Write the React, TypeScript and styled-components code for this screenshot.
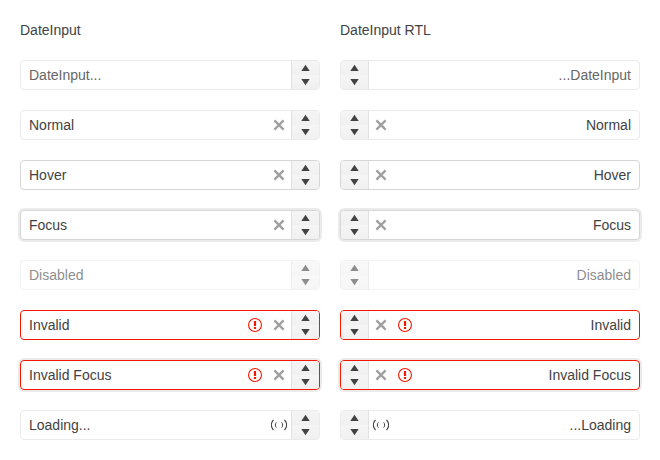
import React from 'react';
import styled, { createGlobalStyle, css } from 'styled-components';

const GlobalStyle = createGlobalStyle`
  body {
    margin: 0;
    background: #fff;
    color: #424242;
    font: 14px/20px "Liberation Sans", Arial, sans-serif;
  }
`;

type Status = 'normal' | 'hover' | 'focus' | 'disabled' | 'invalid' | 'invalidFocus' | 'loading';

interface Field {
  text: string;
  status: Status;
  placeholder?: boolean;
}

const fields: Field[] = [
  { text: 'DateInput...', status: 'normal', placeholder: true },
  { text: 'Normal', status: 'normal' },
  { text: 'Hover', status: 'hover' },
  { text: 'Focus', status: 'focus' },
  { text: 'Disabled', status: 'disabled' },
  { text: 'Invalid', status: 'invalid' },
  { text: 'Invalid Focus', status: 'invalidFocus' },
  { text: 'Loading...', status: 'loading' },
];

const Page = styled.main`
  display: grid;
  grid-template-columns: 300px 300px;
  gap: 20px;
  padding: 20px;
`;

const Column = styled.section`
  display: flex;
  flex-direction: column;
  gap: 20px;
`;

const Title = styled.div`
  height: 20px;
`;

const DateInput = styled.div<{ $status: Status }>`
  box-sizing: border-box;
  display: flex;
  height: 30px;
  border: 1px solid #ebebeb;
  border-radius: 4px;
  overflow: hidden;
  background: #fff;
  ${({ $status }) =>
    ($status === 'hover' || $status === 'focus') &&
    css`
      border-color: #d6d6d6;
    `}
  ${({ $status }) =>
    ($status === 'invalid' || $status === 'invalidFocus') &&
    css`
      border-color: #f31700;
    `}
  ${({ $status }) =>
    ($status === 'focus' || $status === 'invalidFocus') &&
    css`
      box-shadow: 0 0 0 2px rgba(0, 0, 0, 0.08);
    `}
  ${({ $status }) =>
    $status === 'disabled' &&
    css`
      opacity: 0.6;
    `}
`;

const Value = styled.span<{ $placeholder?: boolean }>`
  flex: 1;
  padding: 4px 8px;
  color: ${({ $placeholder }) => ($placeholder ? '#666' : 'inherit')};
`;

const IconSlot = styled.span<{ $tone?: 'error' | 'muted' }>`
  display: flex;
  align-items: center;
  justify-content: center;
  width: 24px;
  color: ${({ $tone }) => ($tone === 'error' ? '#f31700' : 'inherit')};
  opacity: ${({ $tone }) => ($tone === 'muted' ? 0.5 : 1)};
`;

const Spinner = styled.span`
  display: flex;
  flex-direction: column;
  width: 27px;
  border-inline-start: 1px solid rgba(0, 0, 0, 0.08);
  background-color: #f5f5f5;
`;

const SpinButton = styled.span`
  display: flex;
  align-items: center;
  justify-content: center;
  height: 14px;
  background-image: linear-gradient(rgba(0, 0, 0, 0), rgba(0, 0, 0, 0.02));
`;

const Icon = styled.svg`
  display: block;
  flex: none;
  width: 16px;
  height: 16px;
  fill: currentColor;
`;

const CaretIcon = styled(Icon)`
  width: 17px;
`;

const ClearIcon = () => (
  <Icon viewBox="0 0 16 16">
    <path d="M3.4 3.4l9.2 9.2M12.6 3.4l-9.2 9.2" stroke="currentColor" strokeWidth="2.3" />
  </Icon>
);

const WarningIcon = () => (
  <Icon viewBox="0 0 16 16">
    <path
      fillRule="evenodd"
      d="M8 1a7 7 0 1 0 0 14A7 7 0 0 0 8 1zm0 1.1a5.9 5.9 0 1 1 0 11.8A5.9 5.9 0 0 1 8 2.1zM6.9 4h2.2v5H6.9zM6.9 10h2.2v2H6.9z"
    />
  </Icon>
);

const LoadingIcon = () => (
  <Icon viewBox="0 0 16 16">
    <g fill="none" stroke="currentColor">
      <path d="M2.5 2.8C-.2 6-.2 10 2.5 13.2M13.5 2.8c2.7 3.2 2.7 7.2 0 10.4" strokeWidth="1.1" />
      <path d="M5.3 5.4c-1.3 1.6-1.3 3.6 0 5.2M10.7 5.4c1.3 1.6 1.3 3.6 0 5.2" />
    </g>
  </Icon>
);

const DateField = ({ field }: { field: Field }) => {
  const { text, status, placeholder } = field;
  const invalid = status === 'invalid' || status === 'invalidFocus';
  const clearable = !placeholder && status !== 'disabled' && status !== 'loading';
  return (
    <DateInput $status={status}>
      <Value $placeholder={placeholder}>{text}</Value>
      {invalid && (
        <IconSlot $tone="error">
          <WarningIcon />
        </IconSlot>
      )}
      {status === 'loading' && (
        <IconSlot>
          <LoadingIcon />
        </IconSlot>
      )}
      {clearable && (
        <IconSlot $tone="muted">
          <ClearIcon />
        </IconSlot>
      )}
      <Spinner>
        <SpinButton>
          <CaretIcon viewBox="0 0 17 16">
            <path d="M8.5 4.8L4.3 11h8.4z" />
          </CaretIcon>
        </SpinButton>
        <SpinButton>
          <CaretIcon viewBox="0 0 17 16">
            <path d="M8.5 11.2L12.7 5H4.3z" />
          </CaretIcon>
        </SpinButton>
      </Spinner>
    </DateInput>
  );
};

const App = () => (
  <>
    <GlobalStyle />
    <Page>
      <Column>
        <Title>DateInput</Title>
        {fields.map((field) => (
          <DateField key={field.text} field={field} />
        ))}
      </Column>
      <Column>
        <Title>DateInput RTL</Title>
        {fields.map((field) => (
          <div key={field.text} dir="rtl">
            <DateField field={field} />
          </div>
        ))}
      </Column>
    </Page>
  </>
);

export default App;
